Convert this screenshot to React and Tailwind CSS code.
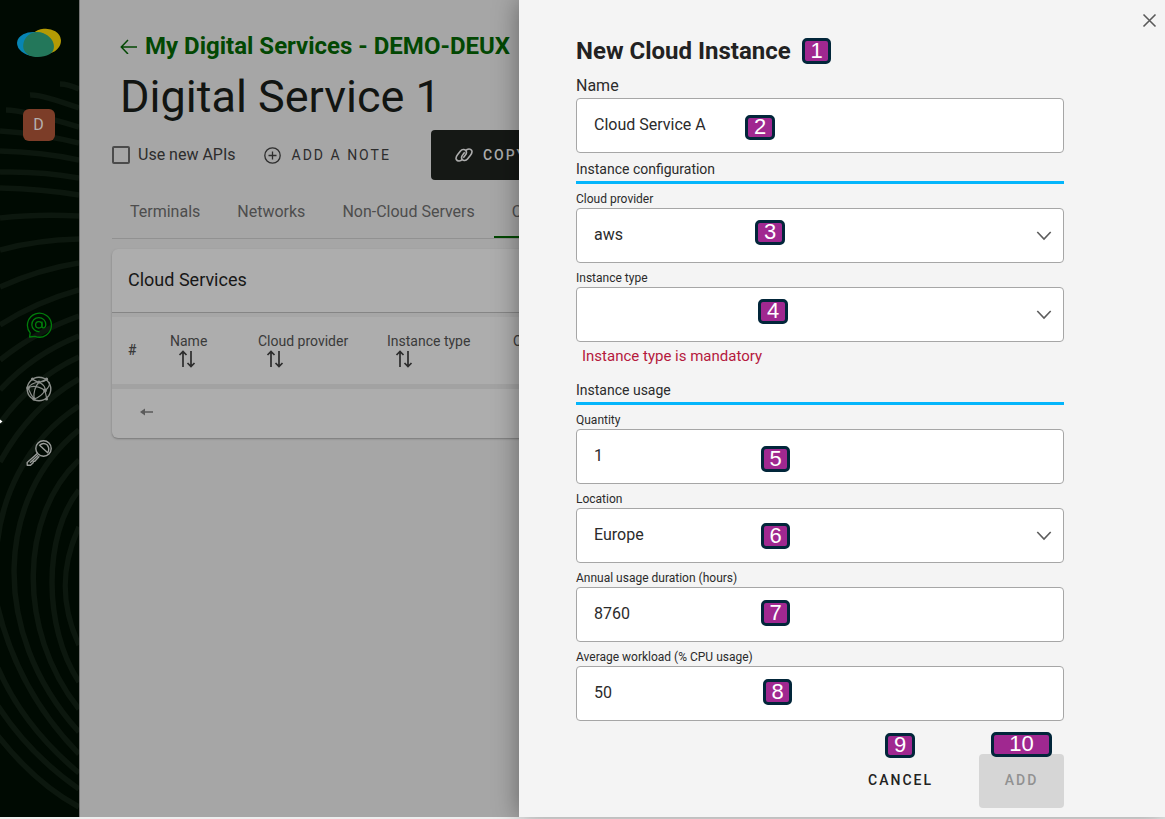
import React from "react";

const RINGS = [
  "M60 84Q68 84 79 89",
  "M30 95Q40 94 79 108",
  "M6 110Q22 110 79 127",
  "M0 131Q42 134 79 143",
  "M0 151Q42 152 79 160",
  "M0 172Q42 171 79 178",
  "M0 188Q42 189 79 195",
  "M0 218Q36 214 79 216",
  "M0 250Q36 240 79 239",
  "M0 287Q40 269 79 263",
  "M0 325Q36 302 79 290",
  "M0 360Q36 331 79 316",
  "M0 390Q33 354 79 336",
  "M0 423Q33 378 79 357",
  "M0 462Q30 407 79 379",
  "M-4 560C-2 500 26 440 79 406",
  "M79 430C-2 495 -13 630 79 732",
  "M79 460C20 515 16 630 79 709",
  "M79 490C43 535 43 627 79 682",
  "M79 527C61 566 60 604 79 645",
  "M-4 600Q16 690 79 754",
  "M-2 668Q23 726 79 773",
  "M-2 706Q30 755 79 789",
  "M-2 736Q36 784 79 807",
];

function Logo() {
  return (
    <svg width="46" height="30" viewBox="0 0 46 30" aria-label="Home">
      <ellipse cx="29" cy="13.5" rx="16" ry="12.8" transform="rotate(-6 29 13.5)" fill="#b39a04" />
      <ellipse cx="19" cy="16.2" rx="18" ry="12.2" transform="rotate(6 19 16.2)" fill="#0785b4" />
      <path
        d="M17.5 4.5C24 2.8 32 6.2 36 12C39 17 39 23.5 33 26.500C28 29.500 18 30 12.500 27C7 23.500 6 18 8.500 12C10.500 8 13.500 5.500 17.500 4.500Z"
        fill="#23775a"
      />
    </svg>
  );
}

function ChatIcon() {
  return (
    <svg width="26" height="26" viewBox="0 0 26 26" fill="none" stroke="#007d0b" strokeWidth="1.300">
      <path d="M4.200 20.800A12 12 0 1 1 9 24.300L3.600 25Z" strokeLinejoin="round" />
      <circle cx="12.800" cy="12.800" r="3.200" />
      <path d="M16 9.500V14.300C16 16.800 19.800 16.300 19.800 12.800A7 7 0 1 0 13.500 19.500" />
    </svg>
  );
}

function NetworkIcon() {
  return (
    <svg width="26" height="26" viewBox="0 0 26 26" fill="none" stroke="#8b8f8b" strokeWidth="1.200">
      <circle cx="13" cy="13" r="11.800" strokeWidth="1.400" />
      <path d="M2 12Q9 8 19 14.500M6 3Q14 9 22 3M2 12Q5 7 13 6Q20 10 19 14.500M6 3L13 6.500L21 3M13 6Q7 13 8 23M19 14.500Q15 21 8 23M19 14.500L21 24M19 14.500Q25 10 23 6M8 23Q5 19 2 12" />
      <g fill="#8b8f8b" stroke="none">
        <circle cx="2" cy="12" r="1.800" />
        <circle cx="19" cy="14.500" r="1.900" />
        <circle cx="6.500" cy="3" r="1.600" />
        <circle cx="20.500" cy="3" r="1.600" />
        <circle cx="13" cy="6" r="1.500" />
        <circle cx="8" cy="23" r="1.700" />
        <circle cx="20.500" cy="23" r="1.500" />
      </g>
    </svg>
  );
}

function KeyIcon() {
  return (
    <svg width="26" height="26" viewBox="0 0 26 26" fill="none" stroke="#9a9d9a" strokeWidth="1.400" strokeLinejoin="round">
      <circle cx="17.500" cy="8.500" r="7.700" />
      <path d="M13.600 5.200Q17.500 1.800 21.300 5Q24 9 21.700 12.800Z" />
      <path d="M11.500 13.300L1.200 22.600V25.300H4.500L7.200 22.800V21.300H8.800L13.300 16.300" />
      <path d="M4 22.800L12 15.200" />
    </svg>
  );
}

function SortIcon() {
  return (
    <svg width="18" height="18" viewBox="0 0 18 18" fill="none" stroke="#2c2c2c" strokeWidth="1.700">
      <path d="M5 17V2M1.500 5L5 1.500L8.500 5M13 1V16M9.500 13L13 16.500L16.500 13" />
    </svg>
  );
}

function Badge({ children, className }) {
  return (
    <span
      className={`absolute flex items-center justify-center rounded-[5px] border-[3px] border-[#02263a] bg-[#a02890] pb-px font-['Liberation_Sans',sans-serif] text-[22px] leading-none font-normal text-white ${className}`}
    >
      {children}
    </span>
  );
}

const BOX =
  "block h-[55px] w-full rounded-[4px] border border-[#a6a6a6] bg-white pl-[17px] pb-[2px] text-base text-[#2b2b2b]";

function Field({ id, label, value, options, badge, badgeClass, large }) {
  return (
    <div>
      <label
        htmlFor={id}
        className={
          large
            ? "flex h-[26px] items-end text-base leading-6 text-[#2b2b2b]"
            : "flex h-6 items-end text-[12px] leading-[18px] text-[#2b2b2b]"
        }
      >
        {label}
      </label>
      <div className="relative">
        {options ? (
          <>
            <select id={id} defaultValue={value} className={`${BOX} appearance-none`}>
              {options.map((o) => (
                <option key={o}>{o}</option>
              ))}
            </select>
            <svg
              className="pointer-events-none absolute right-3 top-5"
              width="16" height="16" viewBox="0 0 16 16" fill="none" stroke="#5c5c5c" strokeWidth="1.600"
            >
              <path d="M1.300 4L8 11L14.700 4" />
            </svg>
          </>
        ) : (
          <input id={id} defaultValue={value} className={BOX} />
        )}
        <Badge className={badgeClass}>{badge}</Badge>
      </div>
    </div>
  );
}

function SectionTitle({ children }) {
  return (
    <h3 className="border-b-[3px] border-[#04b5fb] pt-1 text-[14px] leading-6 text-[#2b2b2b]">{children}</h3>
  );
}

function Sidebar() {
  return (
    <nav className="relative flex w-20 shrink-0 flex-col items-center overflow-hidden border-r border-[#777] bg-[#000a02] pr-[2px] pt-7">
      <svg className="absolute left-0 top-0" width="79" height="819" fill="none" stroke="#0c170e" strokeWidth="5.500">
        {RINGS.map((d) => (
          <path key={d} d={d} />
        ))}
      </svg>
      <a href="#home" className="relative"><Logo /></a>
      <button className="relative mt-[51px] size-8 rounded-[6px] bg-[#7c3d28] text-base text-[#b5b0ae]">D</button>
      <a href="#services" aria-label="Digital services" className="relative mt-[171px]"><ChatIcon /></a>
      <a href="#network" aria-label="Networks" className="relative mt-[38px]"><NetworkIcon /></a>
      <a href="#admin" aria-label="Administration" className="relative mt-[38px]"><KeyIcon /></a>
      <svg className="absolute left-0 top-[418px]" width="3" height="7" fill="#fff">
        <path d="M0 1.500L2.500 3.500L0 5.500Z" />
      </svg>
    </nav>
  );
}

function ServicePage() {
  return (
    <main className="min-w-0 flex-1 overflow-hidden whitespace-nowrap pl-8 text-[#2d2d2d]">
      <a href="#back" className="mt-7 flex h-9 items-center gap-2 pl-2 text-2xl font-bold text-[#034803]">
        <svg width="17" height="16" viewBox="0 0 17 16" fill="none" stroke="#034803" strokeWidth="1.500">
          <path d="M17 9H1.500M8 2L1.300 9L8 16" />
        </svg>
        My Digital Services - DEMO-DEUX
      </a>
      <h1 className="pl-2 text-[45px] font-normal leading-[66px] text-[#121512]">Digital Service 1</h1>
      <div className="flex h-[50px] items-center">
        <label className="flex items-center gap-2 text-base">
          <input type="checkbox" className="size-[18px] appearance-none rounded-[2px] border-2 border-[#4b4b4b]" />
          Use new APIs
        </label>
        <button className="ml-7 flex items-center gap-[11px] text-[14px] tracking-[2px]">
          <svg width="17" height="17" viewBox="0 0 17 17" fill="none" stroke="#2d2d2d" strokeWidth="1.300">
            <path d="M8.500 4.500V12.500M4.500 8.500H12.500" />
            <circle cx="8.500" cy="8.500" r="7.700" />
          </svg>
          ADD A NOTE
        </button>
        <button className="ml-10 flex h-[50px] items-center gap-[10px] rounded-[4px] bg-[#151815] px-6 text-[14px] font-medium tracking-[2px] text-[#adadad]">
          <svg width="18" height="14" viewBox="0 0 18 14" fill="none" stroke="#adadad" strokeWidth="1.600">
            <path d="M7.500 11.200C5.500 13.500 2.500 13.500 1.300 11.500C0.300 9.500 1.500 8 2.700 6.500L5.500 3C7 1.200 9.500 1 10.800 2.600C12 4.200 11.300 6 10.200 7.300L8.300 9.700" />
            <path d="M10.500 2.800C12.500 0.500 15.500 0.500 16.700 2.500C17.700 4.500 16.500 6 15.300 7.500L12.500 11C11 12.800 8.500 13 7.200 11.400C6 9.800 6.700 8 7.800 6.700L9.700 4.300" />
          </svg>
          COPY LINK
        </button>
      </div>
      <div role="tablist" className="mt-[14px] flex gap-px border-b border-[#919191] text-base leading-9 text-[#4d4d4d]">
        <button role="tab" className="px-[18px] pb-2">Terminals</button>
        <button role="tab" className="px-[18px] pb-2">Networks</button>
        <button role="tab" className="px-[18px] pb-2">Non-Cloud Servers</button>
        <button role="tab" aria-selected="true" className="border-b-2 border-[#034803] px-[18px] pb-[6px]">Cloud Services</button>
      </div>
      <section className="mt-[10px] rounded-[6px] bg-[#adadad] shadow-[0_1px_2px_#777]">
        <h2 className="h-16 border-b border-[#858585] pl-4 text-[18px] leading-[62px] text-[#171717]">Cloud Services</h2>
        <table className="w-full table-fixed border-t-[4px] border-[#a6a6a6] text-left text-[14px] text-[#3a3a3a]">
          <colgroup>
            <col className="w-[42px]" />
            <col className="w-[88px]" />
            <col className="w-[129px]" />
            <col className="w-[126px]" />
            <col />
          </colgroup>
          <thead>
            <tr className="h-[69px]">
              <th className="pl-4 font-medium">#</th>
              {["Name", "Cloud provider", "Instance type", "Quantity"].map((h) => (
                <th key={h} className="pl-4 font-normal">
                  <button className="pb-[2px] text-left leading-[18px]">
                    {h}
                    <span className="block pl-2"><SortIcon /></span>
                  </button>
                </th>
              ))}
            </tr>
          </thead>
        </table>
        <div className="flex h-[54px] items-center border-t-[5px] border-[#a2a2a2] pb-1 pl-7">
          <button aria-label="Previous page">
            <svg width="14" height="10" viewBox="0 0 14 10">
              <path d="M0 5L5 1.500V4.200H13V5.800H5V8.500Z" fill="#5a5a5a" />
            </svg>
          </button>
        </div>
      </section>
    </main>
  );
}

function InstanceDrawer() {
  return (
    <aside className="relative z-10 col-start-1 row-start-1 w-[646px] max-w-full justify-self-end bg-[#f4f4f4] pb-[9px] pl-[57px] pr-[101px] shadow-[0_0_24px_rgba(0,0,0,0.4)]">
      <button aria-label="Close" className="absolute right-2 top-[13px]">
        <svg width="15" height="15" viewBox="0 0 15 15" fill="none" stroke="#5a5a5a" strokeWidth="1.600">
          <path d="M1.500 1.500L13.500 13.500M13.500 1.500L1.500 13.500" />
        </svg>
      </button>
      <form>
        <h2 className="relative mt-[30px] h-[42px] text-2xl font-bold leading-[42px] text-[#222]">
          New Cloud Instance
          <Badge className="left-[226px] top-2 h-[26px] w-[29px]">1</Badge>
        </h2>
        <Field large id="name" label="Name" value="Cloud Service A" badge="2" badgeClass="left-[169px] top-[17px] h-[25px] w-[30px]" />
        <SectionTitle>Instance configuration</SectionTitle>
        <Field id="provider" label="Cloud provider" value="aws" options={["aws", "azure", "gcp"]} badge="3" badgeClass="left-[179px] top-3 h-[25px] w-[30px]" />
        <Field id="type" label="Instance type" value="" options={[""]} badge="4" badgeClass="left-[182px] top-3 h-[25px] w-[30px]" />
        <p className="mb-1 pl-[6px] text-[15px] leading-7 text-[#b5193d]">Instance type is mandatory</p>
        <SectionTitle>Instance usage</SectionTitle>
        <Field id="quantity" label="Quantity" value="1" badge="5" badgeClass="left-[185px] top-[17px] h-[26px] w-[29px]" />
        <Field id="location" label="Location" value="Europe" options={["Europe"]} badge="6" badgeClass="left-[185px] top-[15px] h-[26px] w-[29px]" />
        <Field id="duration" label="Annual usage duration (hours)" value="8760" badge="7" badgeClass="left-[185px] top-[13px] h-[26px] w-[29px]" />
        <Field id="workload" label="Average workload (% CPU usage)" value="50" badge="8" badgeClass="left-[187px] top-[13px] h-[26px] w-[29px]" />
        <div className="mt-[33px] flex justify-end gap-[22px]">
          <button type="button" className="relative h-[54px] px-6 pb-[2px] text-[14px] font-medium tracking-[2px] text-[#222]">
            CANCEL
            <Badge className="-top-[21px] left-[41px] h-[25px] w-[30px] tracking-normal">9</Badge>
          </button>
          <button type="button" className="relative h-[54px] w-[85px] rounded-[4px] bg-[#d6d6d6] pb-[2px] text-[14px] font-medium tracking-[2px] text-[#919191]">
            ADD
            <Badge className="-top-[22px] left-3 h-[25px] w-[61px] tracking-normal">10</Badge>
          </button>
        </div>
      </form>
    </aside>
  );
}

export default function App() {
  return (
    <div className="grid min-h-screen grid-cols-1 overflow-hidden bg-[#eee] pb-[2px] font-['Roboto',sans-serif]">
      <div className="col-start-1 row-start-1 flex min-w-0 bg-[#a6a6a6]">
        <Sidebar />
        <ServicePage />
      </div>
      <InstanceDrawer />
    </div>
  );
}
